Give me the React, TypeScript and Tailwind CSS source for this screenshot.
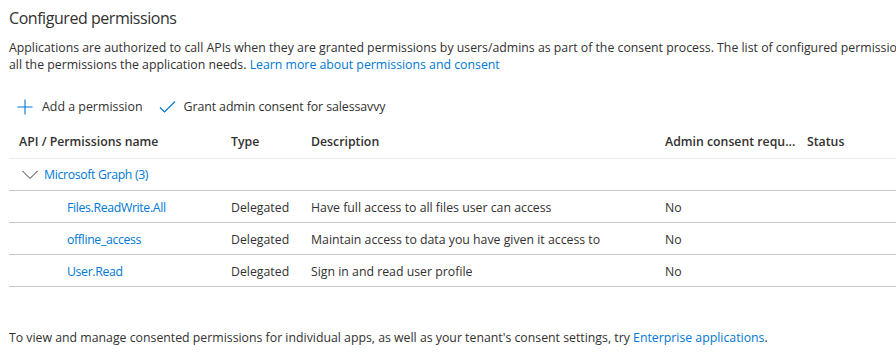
import { useState } from 'react';

type Permission = {
  name: string;
  type: string;
  description: string;
  adminConsent: string;
  status: string;
};

const PERMISSIONS: Permission[] = [
  {
    name: 'Files.ReadWrite.All',
    type: 'Delegated',
    description: 'Have full access to all files user can access',
    adminConsent: 'No',
    status: '',
  },
  {
    name: 'offline_access',
    type: 'Delegated',
    description: 'Maintain access to data you have given it access to',
    adminConsent: 'No',
    status: '',
  },
  {
    name: 'User.Read',
    type: 'Delegated',
    description: 'Sign in and read user profile',
    adminConsent: 'No',
    status: '',
  },
];

const GRID = 'grid grid-cols-[212px_80px_354px_142px_1fr] items-center';

function PlusIcon() {
  return (
    <svg width="16" height="16" viewBox="0 0 16 16" className="text-[#0078d4]">
      <path d="M8 0.5v15M0.5 8h15" stroke="currentColor" strokeWidth="1.1" fill="none" />
    </svg>
  );
}

function CheckIcon() {
  return (
    <svg width="17" height="14" viewBox="0 0 17 14" className="text-[#0078d4]">
      <path d="M1 7.5l4.5 4.5L16 1.5" stroke="currentColor" strokeWidth="1.2" fill="none" />
    </svg>
  );
}

function ChevronDown() {
  return (
    <svg width="16" height="10" viewBox="0 0 16 10" className="text-[#323130]">
      <path d="M0.5 1l7.5 7.5L15.5 1" stroke="currentColor" strokeWidth="1" fill="none" />
    </svg>
  );
}

export default function App() {
  const [expanded, setExpanded] = useState(true);

  return (
    <div className="w-full h-[358px] overflow-hidden bg-white">
      <div
        className="w-[1000px] pl-[9px] pt-[6px] text-[#323130]"
        style={{ fontFamily: '"Open Sans", "Noto Sans", sans-serif' }}
      >
        <h2 className="text-[16px] leading-[24px] font-normal tracking-[-0.45px]">Configured permissions</h2>

        <p className="mt-[9px] text-[12.3px] leading-[17px] whitespace-nowrap">
          Applications are authorized to call APIs when they are granted permissions by users/admins as part of the
          consent process. The list of configured permissions should include
          <br />
          all the permissions the application needs.{' '}
          <a className="text-[#0078d4]">Learn more about permissions and consent</a>
        </p>

        {/* Toolbar */}
        <div className="mt-[16px] h-[36px] flex items-center text-[12.4px]">
          <button className="flex items-center gap-[9px] pl-[8px] pr-[8px] h-full">
            <PlusIcon />
            <span>Add a permission</span>
          </button>
          <button className="flex items-center gap-[8px] pl-[8px] h-full">
            <CheckIcon />
            <span className="tracking-[-0.1px]">Grant admin consent for salessavvy</span>
          </button>
        </div>

        {/* Table */}
        <div className="mt-[1px] text-[12.3px]">
          <div className={`${GRID} h-[33px] font-semibold border-b border-[#edebe9] whitespace-nowrap`}>
            <div className="pl-[10px]">API / Permissions name</div>
            <div className="pl-[10px]">Type</div>
            <div className="pl-[10px]">Description</div>
            <div className="pl-[10px] overflow-hidden">Admin consent requ...</div>
            <div className="pl-[10px]">Status</div>
          </div>

          <div
            className="h-[32px] flex items-center pl-[13px] pt-[1px] gap-[6px] border-b border-[#c8c6c4] cursor-pointer"
            onClick={() => setExpanded(!expanded)}
          >
            <ChevronDown />
            <span className="text-[#0078d4] tracking-[-0.35px]">Microsoft Graph (3)</span>
          </div>

          {expanded &&
            PERMISSIONS.map((p) => (
              <div key={p.name} className={`${GRID} h-[32px] pt-[3px] border-b border-[#c8c6c4] whitespace-nowrap`}>
                <div className="pl-[58px] text-[#0078d4] tracking-[-0.35px]">{p.name}</div>
                <div className="pl-[10px]">{p.type}</div>
                <div className="pl-[10px]">{p.description}</div>
                <div className="pl-[10px]">{p.adminConsent}</div>
                <div className="pl-[10px]">{p.status}</div>
              </div>
            ))}
        </div>

        <p className="mt-[42px] text-[12.3px] leading-[17px] whitespace-nowrap">
          To view and manage consented permissions for individual apps, as well as your tenant's consent settings, try{' '}
          <a className="text-[#0078d4]">Enterprise applications</a>.
        </p>
      </div>
    </div>
  );
}
